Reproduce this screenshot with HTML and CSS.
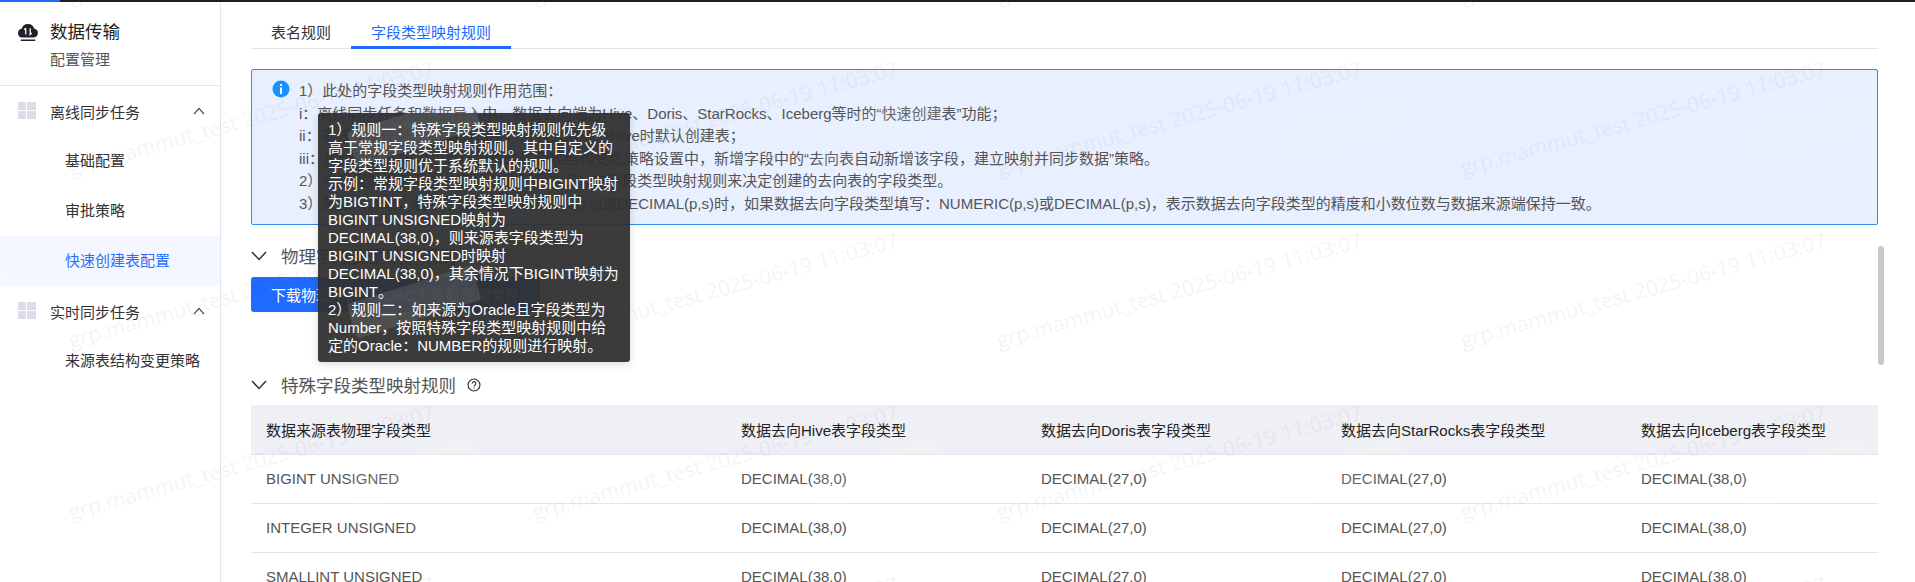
FILE: index.html
```html
<!DOCTYPE html>
<html lang="zh-CN">
<head>
<meta charset="utf-8">
<title>数据传输</title>
<link rel="stylesheet" href="styles.css">
</head>
<body>
<div class="topbar"><div class="topbar-progress"></div></div>
<div class="app">
  <aside class="sidebar">
    <div class="brand">
      <svg class="brand-icon" viewBox="0 0 22 20"><path d="M5.200 14.500a4.400 4.400 0 0 1-.6-8.700 6.600 6.600 0 0 1 12.700 0 4.400 4.400 0 0 1-.5 8.700z" fill="#1d2129"/><path d="M8.700 5.200v6.300M7.200 6.600l1.500-1.400M13.200 5.200v6.300l1.500-1.400" fill="none" stroke="#fff" stroke-width="1.300"/><rect x="3.500" y="16.400" width="15" height="1.700" rx=".8" fill="#1d2129"/></svg>
      <div class="brand-text">
        <div class="brand-title">数据传输</div>
        <div class="brand-sub">配置管理</div>
      </div>
    </div>
    <nav class="menu">
      <div class="menu-group">
        <svg class="grid-icon" viewBox="0 0 18 18"><rect width="8" height="8" /><rect x="9" width="9" height="8"/><rect y="9" width="8" height="8"/><rect x="9" y="9" width="9" height="8"/></svg>
        <span class="menu-label">离线同步任务</span>
        <svg class="chev-up" viewBox="0 0 12 8"><path d="M1 7l5-5.500 5 5.500" fill="none" stroke="#555" stroke-width="1.200"/></svg>
      </div>
      <a class="menu-item">基础配置</a>
      <a class="menu-item">审批策略</a>
      <a class="menu-item active">快速创建表配置</a>
      <div class="menu-group">
        <svg class="grid-icon" viewBox="0 0 18 18"><rect width="8" height="8" /><rect x="9" width="9" height="8"/><rect y="9" width="8" height="8"/><rect x="9" y="9" width="9" height="8"/></svg>
        <span class="menu-label">实时同步任务</span>
        <svg class="chev-up" viewBox="0 0 12 8"><path d="M1 7l5-5.500 5 5.500" fill="none" stroke="#555" stroke-width="1.200"/></svg>
      </div>
      <a class="menu-item">来源表结构变更策略</a>
    </nav>
  </aside>
  <main class="main">
    <div class="tabs">
      <div class="tab">表名规则</div>
      <div class="tab tab-active">字段类型映射规则</div>
    </div>
    <div class="alert">
      <svg class="alert-icon" viewBox="0 0 18 18"><circle cx="9" cy="9" r="8.500" fill="#1890ff"/><rect x="8" y="7.500" width="2" height="6.500" fill="#fff"/><rect x="8" y="4" width="2" height="2" fill="#fff"/></svg>
      <div class="alert-body">
        <div>1）此处的字段类型映射规则作用范围：</div>
        <div>i：离线同步任务和数据导入中，数据去向端为Hive、Doris、StarRocks、Iceberg等时的“快速创建表”功能；</div>
        <div>ii：离线同步任务 一批量新增中，数据去向端为Hive时默认创建表；</div>
        <div>iii：离线同步任务中，高级配置的来源表结构变化策略设置中，新增字段中的“去向表自动新增该字段，建立映射并同步数据”策略。</div>
        <div>2）将根据数据来源端的字段类型和此处定义的字段类型映射规则来决定创建的去向表的字段类型。</div>
        <div>3）数据来源端，若字段类型为NUMERIC(p,s)或DECIMAL(p,s)时，如果数据去向字段类型填写：NUMERIC(p,s)或DECIMAL(p,s)，表示数据去向字段类型的精度和小数位数与数据来源端保持一致。</div>
      </div>
    </div>
    <section class="section">
      <div class="section-head">
        <svg class="chev-down" viewBox="0 0 16 10"><path d="M1 1l7 7.500 7-7.500" fill="none" stroke="#333" stroke-width="1.500"/></svg>
        <span class="section-title">物理字段类型映射规则</span>
      </div>
      <button class="btn-primary">下载物理字段与JDBC类映射规则文件</button>
    </section>
    <section class="section section-special">
      <div class="section-head">
        <svg class="chev-down" viewBox="0 0 16 10"><path d="M1 1l7 7.500 7-7.500" fill="none" stroke="#333" stroke-width="1.500"/></svg>
        <span class="section-title">特殊字段类型映射规则</span>
        <svg class="help-icon" viewBox="0 0 16 16"><circle cx="8" cy="8" r="6.800" fill="none" stroke="#333" stroke-width="1.300"/><path d="M5.900 6.300a2.100 2.100 0 1 1 3.300 1.700c-.8.500-1.200.9-1.200 1.700" fill="none" stroke="#333" stroke-width="1.300"/><rect x="7.400" y="10.800" width="1.200" height="1.300" fill="#333"/></svg>
      </div>
      <table class="rules">
        <colgroup><col class="c1"><col class="c2"><col class="c2"><col class="c2"><col class="c3"></colgroup>
        <thead>
          <tr><th>数据来源表物理字段类型</th><th>数据去向Hive表字段类型</th><th>数据去向Doris表字段类型</th><th>数据去向StarRocks表字段类型</th><th>数据去向Iceberg表字段类型</th></tr>
        </thead>
        <tbody>
          <tr><td>BIGINT UNSIGNED</td><td>DECIMAL(38,0)</td><td>DECIMAL(27,0)</td><td>DECIMAL(27,0)</td><td>DECIMAL(38,0)</td></tr>
          <tr><td>INTEGER UNSIGNED</td><td>DECIMAL(38,0)</td><td>DECIMAL(27,0)</td><td>DECIMAL(27,0)</td><td>DECIMAL(38,0)</td></tr>
          <tr><td>SMALLINT UNSIGNED</td><td>DECIMAL(38,0)</td><td>DECIMAL(27,0)</td><td>DECIMAL(27,0)</td><td>DECIMAL(38,0)</td></tr>
        </tbody>
      </table>
    </section>
  </main>
</div>
<div class="tooltip">1）规则一：特殊字段类型映射规则优先级<br>高于常规字段类型映射规则。其中自定义的<br>字段类型规则优于系统默认的规则。<br>示例：常规字段类型映射规则中BIGINT映射<br>为BIGTINT，特殊字段类型映射规则中<br>BIGINT UNSIGNED映射为<br>DECIMAL(38,0)，则来源表字段类型为<br>BIGINT UNSIGNED时映射<br>DECIMAL(38,0)，其余情况下BIGINT映射为<br>BIGINT。<br>2）规则二：如来源为Oracle且字段类型为<br>Number，按照特殊字段类型映射规则中给<br>定的Oracle：NUMBER的规则进行映射。</div>
<div class="scrollbar"></div>
<svg class="watermark" width="1915" height="582">
  <defs>
    <pattern id="wm" patternUnits="userSpaceOnUse" x="1453" y="212" width="464" height="172">
      <text class="wm-text" x="0" y="0" transform="translate(10 136) rotate(-15.500)">grp.mammut_test 2025-06-19 11:03:07</text>
      <rect class="wm-band" x="-65" y="-18" width="130" height="36" rx="4" transform="translate(353 90) rotate(-17.500)"/>
    </pattern>
  </defs>
  <rect width="1915" height="582" fill="url(#wm)"/>
</svg>
</body>
</html>
```
FILE: styles.css
```css
* { box-sizing: border-box; }
html, body { margin: 0; height: 100%; overflow: hidden; background: #fff; }
body { font-family: "Liberation Sans", "Noto Sans CJK SC", sans-serif; font-size: 15px; color: #555; text-spacing-trim: space-all; }
.topbar { height: 2px; background: #1c1e23; }
.topbar-progress { width: 60px; height: 2px; background: #1f6bff; }
.app { display: flex; height: 580px; }
.sidebar { width: 221px; flex: none; border-right: 1px solid #e4e5ec; }
.brand { display: flex; height: 84px; border-bottom: 1px solid #e4e5ec; padding: 21px 0 0 17px; }
.brand-icon { width: 22px; height: 20px; flex: none; }
.brand-text { margin-left: 11px; }
.brand-title { font-size: 17.500px; line-height: 18px; color: #222; }
.brand-sub { font-size: 15px; line-height: 20px; margin-top: 9px; color: #555; }
.menu { display: flex; flex-direction: column; }
.menu-group { display: flex; align-items: center; height: 50px; padding-left: 18px; }
.grid-icon { width: 18px; height: 18px; fill: #dcdde8; flex: none; }
.menu-label { margin-left: 14px; color: #333; }
.chev-up { width: 12px; height: 8px; margin-left: auto; margin-right: 15px; }
.menu-item { display: block; height: 50px; line-height: 50px; padding-left: 65px; color: #333; }
.menu-item.active { color: #2b6fff; background: #f4f7ff; }
.main { flex: 1; min-width: 0; padding: 0 37px 0 30px; }
.tabs { display: flex; height: 47px; border-bottom: 1px solid #e4e5ec; padding-left: 20px; }
.tab { height: 47px; padding-top: 22px; line-height: 18px; color: #333; margin-right: 20px; }
.tab-active { color: #1f6bff; border-bottom: 3px solid #1f6bff; padding: 22px 20px 0; margin-right: 0; }
.alert { display: flex; margin-top: 20px; height: 156px; border: 1px solid #2f8eee; border-radius: 2px; background: #e8effe; padding: 10px 20px; }
.alert-icon { width: 18px; height: 18px; flex: none; }
.alert-body { margin-left: 9px; line-height: 22.500px; color: #555; white-space: nowrap; }
.section-head { display: flex; align-items: center; height: 30px; margin-top: 15px; }
.chev-down { width: 16px; height: 10px; flex: none; margin-top: 1px; }
.section-title { margin-left: 14px; font-size: 17.500px; color: #555; }
.btn-primary { display: block; width: 289px; height: 35px; margin-top: 7px; border: 0; border-radius: 3px; background: #1f6bff; color: #fff; font: inherit; text-align: left; padding: 0 20px; white-space: nowrap; }
.section-special { margin-top: 57px; }
.help-icon { width: 14px; height: 14px; margin-left: 11px; margin-top: 1px; }
.rules { width: 1627px; border-collapse: collapse; table-layout: fixed; margin-top: 6px; }
.c1 { width: 475px; }
.c2 { width: 300px; }
.c3 { width: 252px; }
.rules th, .rules td { height: 49px; padding: 0 15px; text-align: left; font-weight: 400; border-bottom: 1px solid #e4e5ec; white-space: nowrap; }
.rules th { background: #eff0f5; color: #222; }
.rules td { color: #555; }
.tooltip { position: absolute; left: 318px; top: 113px; width: 312px; height: 249px; padding: 8px 10px; background: rgba(48,48,50,.95); color: #fff; line-height: 18px; border-radius: 3px; white-space: nowrap; box-shadow: 0 2px 8px rgba(0,0,0,.15); }
.tooltip::after { content: ""; position: absolute; left: 150px; bottom: -4px; width: 12px; height: 12px; background: #3c3c3e; transform: rotate(45deg) scale(.7); z-index: -1; }
.scrollbar { position: absolute; left: 1878px; top: 246px; width: 6px; height: 119px; border-radius: 3px; background: #c8c8c8; }
.watermark { position: absolute; left: 0; top: 0; pointer-events: none; }
.wm-text { font-family: "Open Sans", sans-serif; font-size: 21px; fill: rgba(40,45,70,.05); }
.wm-band { fill: rgba(255,255,255,.1); }
```
